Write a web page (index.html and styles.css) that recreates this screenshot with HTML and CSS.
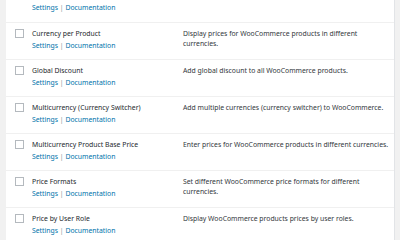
FILE: index.html
```html
<!DOCTYPE html>
<html>
<head>
<meta charset="utf-8">
<link rel="stylesheet" href="styles.css">
</head>
<body>
<div class="page">
  <div class="table">
    <div class="row first">
      <div class="cb"><span class="box"></span></div>
      <div class="name">
        <div class="title">Currency Exchange Rates</div>
        <div class="links"><a>Settings</a> <span class="sep">|</span> <a>Documentation</a></div>
      </div>
      <div class="desc">Automatic currency exchange rates for WooCommerce.</div>
    </div>
    <div class="row">
      <div class="cb"><span class="box"></span></div>
      <div class="name">
        <div class="title">Currency per Product</div>
        <div class="links"><a>Settings</a> <span class="sep">|</span> <a>Documentation</a></div>
      </div>
      <div class="desc">Display prices for WooCommerce products in different currencies.</div>
    </div>
    <div class="row">
      <div class="cb"><span class="box"></span></div>
      <div class="name">
        <div class="title">Global Discount</div>
        <div class="links"><a>Settings</a> <span class="sep">|</span> <a>Documentation</a></div>
      </div>
      <div class="desc">Add global discount to all WooCommerce products.</div>
    </div>
    <div class="row">
      <div class="cb"><span class="box"></span></div>
      <div class="name">
        <div class="title">Multicurrency (Currency Switcher)</div>
        <div class="links"><a>Settings</a> <span class="sep">|</span> <a>Documentation</a></div>
      </div>
      <div class="desc">Add multiple currencies (currency switcher) to WooCommerce.</div>
    </div>
    <div class="row">
      <div class="cb"><span class="box"></span></div>
      <div class="name">
        <div class="title">Multicurrency Product Base Price</div>
        <div class="links"><a>Settings</a> <span class="sep">|</span> <a>Documentation</a></div>
      </div>
      <div class="desc">Enter prices for WooCommerce products in different currencies.</div>
    </div>
    <div class="row">
      <div class="cb"><span class="box"></span></div>
      <div class="name">
        <div class="title">Price Formats</div>
        <div class="links"><a>Settings</a> <span class="sep">|</span> <a>Documentation</a></div>
      </div>
      <div class="desc">Set different WooCommerce price formats for different currencies.</div>
    </div>
    <div class="row">
      <div class="cb"><span class="box"></span></div>
      <div class="name">
        <div class="title">Price by User Role</div>
        <div class="links"><a>Settings</a> <span class="sep">|</span> <a>Documentation</a></div>
      </div>
      <div class="desc">Display WooCommerce products prices by user roles.</div>
    </div>
  </div>
</div>
</body>
</html>
```
FILE: styles.css
```css
html, body {
  margin: 0;
  padding: 0;
}
body {
  background: #f1f1f1;
  font-family: "Noto Sans", "Open Sans", sans-serif;
  font-size: 6.85px;
  color: #32373c;
  width: 400px;
  height: 240px;
  overflow: hidden;
}
.page {
  padding-left: 6px;
  width: 389px;
}
.table {
  background: #fff;
  border-right: 1px solid #e2e4e7;
  margin-top: -15px;
}
.row {
  display: grid;
  grid-template-columns: 26px 151px 1fr;
  height: 37px;
  box-sizing: border-box;
  border-top: 1px solid #f0f0f0;
}
.row.first {
  border-top: none;
}
.cb {
  padding-top: 6px;
  padding-left: 9px;
}
.box {
  display: block;
  width: 9px;
  height: 9px;
  box-sizing: border-box;
  border: 1px solid #b4b9be;
  background: #fff;
}
.name {
  padding-top: 6px;
}
.title {
  line-height: 10px;
  color: #23282d;
}
.links {
  margin-top: 2px;
  line-height: 10px;
  color: #0073aa;
}
.links .sep {
  color: #8c9196;
}
.desc {
  padding-top: 6px;
  padding-right: 2px;
  line-height: 10px;
  color: #32373c;
}
```
